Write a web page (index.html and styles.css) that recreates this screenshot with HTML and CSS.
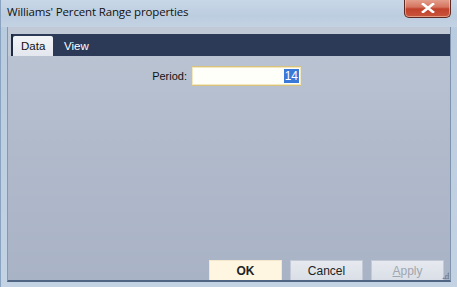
FILE: index.html
```
<!DOCTYPE html>
<html>
<head>
<meta charset="utf-8">
<link rel="stylesheet" href="styles.css">
</head>
<body>
<div class="window">
  <div class="titlebar">
    <span class="title">Williams' Percent Range properties</span>
    <button class="close" aria-label="Close">
      <svg width="14" height="10" viewBox="0 0 14 10"><path d="M2 1 L12 9 M12 1 L2 9" stroke="#fff" stroke-width="2.6" stroke-linecap="square"/></svg>
    </button>
  </div>
  <div class="client">
    <div class="tabstrip">
      <div class="tab active">Data</div>
      <div class="tab">View</div>
    </div>
    <div class="page">
      <div class="field">
        <label class="label" for="period">Period:</label>
        <div class="input"><span class="sel">14</span></div>
      </div>
      <div class="buttons">
        <button class="btn ok">OK</button>
        <button class="btn">Cancel</button>
        <button class="btn disabled"><span class="u">A</span>pply</button>
        <span class="grip"></span>
      </div>
    </div>
  </div>
</div>
</body>
</html>
```

FILE: styles.css
```
html, body {
  margin: 0;
  padding: 0;
}
body {
  width: 457px;
  height: 287px;
  overflow: hidden;
  font-family: "Liberation Sans", Arial, sans-serif;
}
.window {
  width: 457px;
  height: 287px;
  display: flex;
  flex-direction: column;
  background: linear-gradient(180deg, #c5d5e6 0%, #b9cbde 10%, #c3d3e4 100%);
  box-sizing: border-box;
  border-left: 1px solid #8aa3c0;
}
.titlebar {
  height: 27px;
  display: flex;
  align-items: flex-start;
  position: relative;
  background: linear-gradient(180deg, #c8d7e7 0%, #bccde0 60%, #c4d3e3 100%);
}
.title {
  font-family: "Open Sans", "Liberation Sans", sans-serif;
  font-size: 11.5px;
  color: #111;
  padding: 4px 0 0 6px;
  letter-spacing: -0.15px;
}
.close {
  position: absolute;
  left: 403px;
  top: -1px;
  width: 47px;
  height: 19px;
  border: 1px solid #5c2a22;
  border-top: none;
  border-radius: 0 0 5px 5px;
  background: linear-gradient(180deg, #e6a493 0%, #d4745e 45%, #c1412b 55%, #c9553c 100%);
  box-shadow: inset 0 0 0 1px rgba(255,220,200,0.5);
  display: flex;
  align-items: center;
  justify-content: center;
  padding: 0;
}
.client {
  flex: 1;
  margin: 0 6px 5px 6px;
  border-right: 1px solid #7f93ad;
  border-bottom: 2px solid #4f6583;
  border-left: 1px solid #8597b3;
  background: #c1c9d7;
  display: flex;
  flex-direction: column;
  padding-top: 7px;
}
.tabstrip {
  height: 22px;
  margin-left: 3px;
  background: #2c3a58;
  display: flex;
  align-items: flex-end;
  border-left: 2px solid #1e2a40;
}
.tab {
  font-size: 11.5px;
  color: #fff;
  height: 20px;
  line-height: 20px;
  padding: 0 8px 0 9px;
}
.tab.active {
  background: linear-gradient(180deg, #f2f4f7 0%, #e3e7ee 100%);
  color: #111;
  width: 40px;
  padding: 0;
  box-sizing: border-box;
  padding-left: 8px;
  border-radius: 2px 2px 0 0;
}
.tab + .tab {
  padding-left: 11px;
}
.page {
  flex: 1;
  background: linear-gradient(180deg, #bac3d2 0%, #b0bacb 40%, #a9b3c6 100%);
  display: flex;
  flex-direction: column;
  position: relative;
}
.field {
  display: flex;
  align-items: center;
  margin-top: 10px;
  margin-left: 143px;
}
.label {
  font-size: 11px;
  color: #111;
  width: 36px;
  text-align: right;
  margin-right: 4px;
}
.input {
  border: 1px solid #d9c27c;
  box-shadow: inset 0 0 0 1px #f3e7bd;
  background: #fffffa;
  display: flex;
  align-items: center;
  justify-content: flex-end;
  padding-right: 2px;
  box-sizing: border-box;
  height: 20px;
  width: 111px;
}
.sel {
  background: #3a79d7;
  color: #fff;
  font-size: 12px;
  line-height: 14px;
  padding: 0 1px;
}
.buttons {
  margin-top: auto;
  display: flex;
  justify-content: flex-end;
  gap: 8px;
  padding-right: 6px;
}
.btn {
  width: 73px;
  height: 20px;
  border: 1px solid #c3cad6;
  border-bottom: none;
  background: linear-gradient(180deg, #e6e9ef 0%, #dadfe7 100%);
  font-family: "Liberation Sans", Arial, sans-serif;
  font-size: 12px;
  color: #222;
  padding: 0;
}
.btn.ok {
  background: #fff6e2;
  border-color: #f4e8cc;
  font-weight: bold;
  font-size: 12px;
}
.btn.disabled {
  color: #a0a6b0;
}
.u {
  text-decoration: underline;
}
.grip {
  position: absolute;
  right: 1px;
  bottom: 1px;
  width: 7px;
  height: 7px;
  background: radial-gradient(circle, #6d7b91 0.8px, transparent 1.2px) 0 0 / 2.5px 2.5px;
  clip-path: polygon(100% 0, 100% 100%, 0 100%);
}
```
